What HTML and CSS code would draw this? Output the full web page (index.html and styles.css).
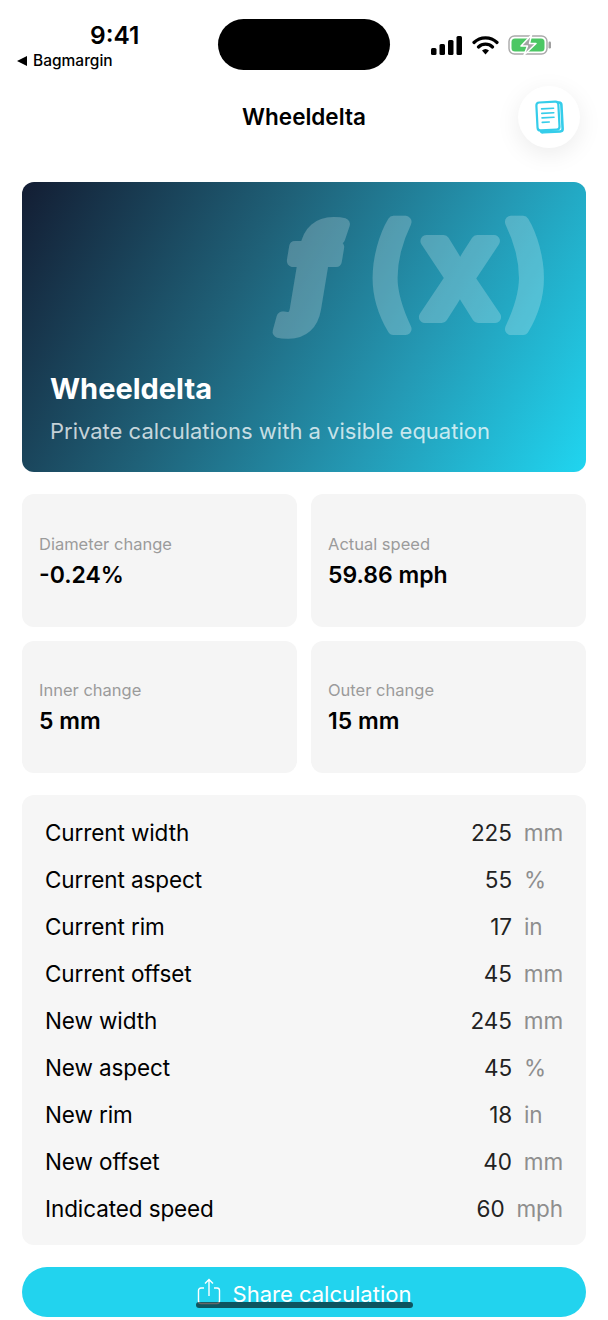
FILE: index.html
```html
<!DOCTYPE html>
<html lang="en">
<head>
  <meta charset="UTF-8">
  <meta name="viewport" content="width=device-width, initial-scale=1">
  <title>Wheeldelta</title>
  <link rel="stylesheet" href="styles.css">
</head>
<body>
  <div class="statusbar">
    <div class="status-left">
      <div class="clock">9:41</div>
      <div class="back"><span class="back-arrow"></span>Bagmargin</div>
    </div>
    <div class="island"></div>
    <div class="status-right">
      <svg width="32" height="19" viewBox="0 0 32 19"><rect x="0" y="12" width="5.500" height="7" rx="1.500"/><rect x="8.500" y="8" width="5.500" height="11" rx="1.500"/><rect x="17" y="4" width="5.500" height="15" rx="1.500"/><rect x="25.500" y="0" width="5.500" height="19" rx="1.500"/></svg>
      <svg width="27" height="20" viewBox="0 0 27 20"><path d="M2 7.500a16.500 16.500 0 0 1 23 0M6.500 12a10 10 0 0 1 14 0" fill="none" stroke="#000" stroke-width="3.200" stroke-linecap="round"/><path d="M10 15.500a5.200 5.200 0 0 1 7 0L13.500 19.500z"/></svg>
      <svg width="44" height="20" viewBox="0 0 44 20"><rect x="1" y="1" width="38" height="18" rx="5.500" fill="#fff" stroke="#a9a9a9" stroke-width="1.400"/><rect x="3.500" y="3.500" width="33" height="13" rx="3.500" fill="#4cc764"/><rect x="40.500" y="6.500" width="2.500" height="7" rx="1.200" fill="#a0a0a0"/><path d="M23.500 0 13 11h6.500L16 20 28 8.500h-6.500z" fill="#a3a3a3" stroke="#fff" stroke-width="1.500" stroke-linejoin="round"/></svg>
    </div>
  </div>

  <header class="navbar">
    <h1>Wheeldelta</h1>
    <div class="doc-btn">
      <svg width="30" height="36" viewBox="0 0 30 36" fill="none"><g transform="rotate(-3 15 18)"><path d="M25 4h.500a2.500 2.500 0 0 1 2.500 2.500v24a2.500 2.500 0 0 1-2.500 2.500H8.500A2.500 2.500 0 0 1 6 30.500" stroke="#35cdea" stroke-width="2.600" stroke-linecap="round"/><rect x="3" y="3" width="22" height="28" rx="3" fill="#fff" stroke="#35cdea" stroke-width="2.200"/><path d="M8 9.500h12M8 14h12M8 18.500h12M8 23h7" stroke="#35cdea" stroke-width="1.600" stroke-linecap="round"/></g></svg>
    </div>
  </header>

  <main class="content">
    <section class="hero">
      <svg class="hero-fx" width="310" height="180" viewBox="0 0 310 180">
        <text class="fx-text"><tspan class="fx-f" x="27" y="116">f</tspan><tspan x="105" y="121">(</tspan><tspan class="fx-x" x="159" y="125">x</tspan><tspan x="244" y="121">)</tspan></text>
      </svg>
      <h2>Wheeldelta</h2>
      <p>Private calculations with a visible equation</p>
    </section>

    <section class="stats">
      <div class="stat"><span>Diameter change</span><strong>-0.24%</strong></div>
      <div class="stat"><span>Actual speed</span><strong>59.86 mph</strong></div>
      <div class="stat"><span>Inner change</span><strong>5 mm</strong></div>
      <div class="stat"><span>Outer change</span><strong>15 mm</strong></div>
    </section>

    <section class="inputs">
      <div class="row"><span class="name">Current width</span><span class="val">225</span><span class="unit">mm</span></div>
      <div class="row"><span class="name">Current aspect</span><span class="val">55</span><span class="unit">%</span></div>
      <div class="row"><span class="name">Current rim</span><span class="val">17</span><span class="unit">in</span></div>
      <div class="row"><span class="name">Current offset</span><span class="val">45</span><span class="unit">mm</span></div>
      <div class="row"><span class="name">New width</span><span class="val">245</span><span class="unit">mm</span></div>
      <div class="row"><span class="name">New aspect</span><span class="val">45</span><span class="unit">%</span></div>
      <div class="row"><span class="name">New rim</span><span class="val">18</span><span class="unit">in</span></div>
      <div class="row"><span class="name">New offset</span><span class="val">40</span><span class="unit">mm</span></div>
      <div class="row"><span class="name">Indicated speed</span><span class="val">60</span><span class="unit">mph</span></div>
    </section>

    <button class="share">
      <svg width="24" height="28" viewBox="0 0 24 28" fill="none" stroke="#fff" stroke-width="1.400"><path d="M7 10H4a2.500 2.500 0 0 0-2.500 2.500V23A2.500 2.500 0 0 0 4 25.500h16a2.500 2.500 0 0 0 2.500-2.500V12.500A2.500 2.500 0 0 0 20 10h-3M12 18V2M8 5.500 12 1.500 16 5.500"/></svg>
      Share calculation
    </button>
  </main>
  <div class="home-bar"></div>
</body>
</html>
```

FILE: styles.css
```css
*{box-sizing:border-box;margin:0;padding:0;}

html,body{height:1320px;overflow:hidden;}

body{
  font-family:'Inter','Liberation Sans',sans-serif;
  background:#fff;
  color:#000;
  position:relative;
}

/* ---------- status bar ---------- */
.statusbar{
  height:86px;
  display:flex;
  padding:19px 0 0 17px;
}
.status-left{width:201px;}
.clock{
  font-size:24.500px;
  font-weight:600;
  line-height:30px;
  margin-top:1px;
  padding-left:73px;
}
.back{
  font-size:15.500px;
  font-weight:500;
  line-height:20px;
  margin-top:1px;
  display:flex;
  align-items:center;
  gap:6px;
}
.back-arrow{
  width:0;
  height:0;
  border-style:solid;
  border-width:5px 10px 5px 0;
  border-color:transparent #000 transparent transparent;
}
.island{
  width:172px;
  height:51px;
  border-radius:26px;
  background:#000;
}
.status-right{
  display:flex;
  gap:9px;
  height:20px;
  margin:16px 0 0 41px;
  align-items:center;
}

/* ---------- nav ---------- */
.navbar{
  height:96px;
  position:relative;
  text-align:center;
}
.navbar h1{
  font-size:22.500px;
  font-weight:600;
  line-height:62px;
}
.doc-btn{
  position:absolute;
  top:0;
  right:28px;
  width:62px;
  height:62px;
  border-radius:50%;
  background:#fff;
  box-shadow:0 6px 24px rgba(0,0,0,.08);
  display:flex;
  align-items:center;
  justify-content:center;
}

/* ---------- content ---------- */
.content{
  padding:0 22px;
  display:flex;
  flex-direction:column;
}

.hero{
  height:290px;
  border-radius:12px;
  background:linear-gradient(120deg,#131d33 0%,#1f6178 38%,#2499b4 68%,#20d5f0 100%);
  color:#fff;
  padding:189px 28px 0;
  position:relative;
}
.hero-fx{
  position:absolute;
  top:10px;
  left:240px;
  opacity:.22;
  overflow:visible;
}
.fx-text{
  font-family:'Inter',sans-serif;
  font-size:118px;
  font-weight:500;
  fill:#fff;
  stroke:#fff;
  stroke-width:12px;
  stroke-linejoin:round;
  stroke-linecap:round;
}
.fx-f{font-style:italic;font-size:112px;font-weight:800;}
.fx-x{font-size:140px;}
.hero h2{
  font-size:29px;
  font-weight:700;
  line-height:36px;
}
.hero p{
  font-size:22px;
  line-height:30px;
  margin-top:9px;
  color:rgba(255,255,255,.75);
}

.stats{
  display:grid;
  grid-template-columns:1fr 1fr;
  gap:14px;
  margin-top:22px;
}
.stat{
  height:132.500px;
  background:#f5f5f5;
  border-radius:12px;
  padding:39.500px 17px 0;
  display:flex;
  flex-direction:column;
}
.stat span{
  font-size:16.500px;
  line-height:20px;
  color:#9b9b9b;
}
.stat strong{
  font-size:23px;
  font-weight:600;
  line-height:30px;
  margin-top:6px;
}

.inputs{
  margin-top:22px;
  height:450px;
  background:#f6f6f6;
  border-radius:12px;
  padding:14px 23px 13px 23px;
}
.row{
  height:47px;
  display:flex;
  align-items:center;
  font-size:22.500px;
  letter-spacing:-.1px;
}
.name{flex:1;}
.unit{
  color:#8e8e8e;
  margin-left:12px;
  min-width:39px;
}
.val{color:#222;}

.share{
  margin-top:22px;
  height:50px;
  border:none;
  border-radius:25px;
  background:#22d3ee;
  color:#fff;
  font-family:inherit;
  font-size:22px;
  font-weight:400;
  padding-top:3px;
  display:flex;
  align-items:center;
  justify-content:center;
  gap:12px;
}
.share svg{margin-top:-4px;}

.home-bar{
  position:absolute;
  left:196px;
  top:1302px;
  width:217px;
  height:6px;
  border-radius:3px;
  background:rgba(0,0,0,.6);
}
```
